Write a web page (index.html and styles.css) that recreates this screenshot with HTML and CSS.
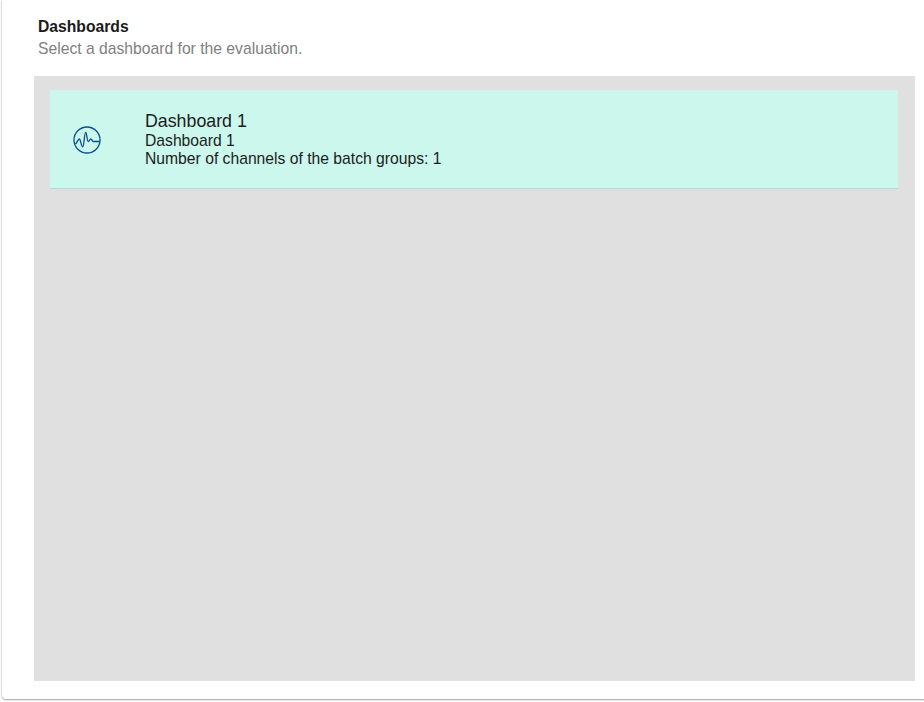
FILE: index.html
```html
<!DOCTYPE html>
<html lang="en">
<head>
<meta charset="utf-8">
<title>Dashboards</title>
<link rel="stylesheet" href="styles.css">
</head>
<body>
<main class="panel">
  <header class="head">
    <h1 class="title">Dashboards</h1>
    <p class="subtitle">Select a dashboard for the evaluation.</p>
  </header>
  <section class="list">
    <article class="item">
      <div class="item-icon">
        <svg class="pulse" viewBox="0 0 28 28" width="28" height="28" fill="none" stroke="#0b4f8f" stroke-width="1.3" stroke-linecap="round" stroke-linejoin="round">
          <circle cx="14" cy="14" r="13"/>
          <path d="M2.8 17.6c1.2 -.6 2.2 -4.6 3.5 -4.6c1.4 0 1.8 7.8 3.4 7.8c1.6 0 1.5 -14.5 3 -14.5c1.3 0 1.1 9.2 2.6 9.2c1.1 0 1.4 -2.5 2.6 -2.5c1 0 1.2 2.5 2.4 2.5h5.9"/>
        </svg>
      </div>
      <div class="item-text">
        <div class="item-name">Dashboard 1</div>
        <div class="item-line">Dashboard 1</div>
        <div class="item-line">Number of channels of the batch groups: 1</div>
      </div>
    </article>
  </section>
</main>
</body>
</html>
```
FILE: styles.css
```css
html, body {
  margin: 0;
  height: 702px;
  overflow: hidden;
  background: #fff;
  font-family: "Liberation Sans", Arial, sans-serif;
}
.panel {
  box-sizing: border-box;
  height: 699px;
  margin: 0 -4px 0 2px;
  padding: 17px 13px 18px 32px;
  display: flex;
  flex-direction: column;
  background: #fff;
  border-radius: 0 0 4px 4px;
  box-shadow: 0 1px 2px rgba(0,0,0,.35), 0 0 2px rgba(0,0,0,.12);
}
.head {
  box-sizing: border-box;
  padding-left: 4px;
  height: 59px;
  flex: none;
}
.title {
  margin: 0;
  font-size: 15.7px;
  font-weight: 700;
  line-height: 20px;
  color: #1a1a1a;
}
.subtitle {
  margin: 1px 0 0;
  font-size: 15.7px;
  line-height: 21px;
  color: #808080;
}
.list {
  flex: 1;
  background: #e0e0e0;
  padding: 14px 17px 0 16px;
}
.item {
  box-sizing: border-box;
  height: 99px;
  display: flex;
  align-items: center;
  background: #ccf7ed;
  border-bottom: 1px solid #aedcd2;
}
.item-icon {
  flex: none;
  width: 95px;
  padding: 2px 0 0 22.5px;
  box-sizing: border-box;
  display: flex;
}
.item-text {
  padding-top: 1px;
  color: #1c1c1c;
  font-size: 15.7px;
  line-height: 18px;
}
.item-name {
  margin-bottom: 1px;
  font-size: 17.8px;
  line-height: 20px;
}
```
